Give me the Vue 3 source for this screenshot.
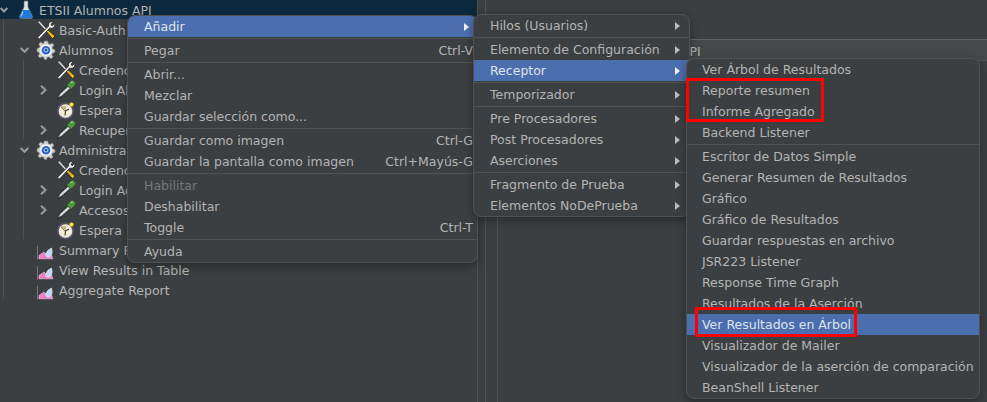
<script setup>
// arbol de la izquierda
const tree = [
  { label: 'Basic-Auth', icon: 'tool' },
  {
    label: 'Alumnos', icon: 'gear', open: true,
    children: [
      { label: 'Credenciales', icon: 'tool' },
      { label: 'Login Alumno', icon: 'dropper', arrow: true },
      { label: 'Espera', icon: 'timer' },
      { label: 'Recuperar datos', icon: 'dropper', arrow: true }
    ]
  },
  {
    label: 'Administradores', icon: 'gear', open: true,
    children: [
      { label: 'Credenciales', icon: 'tool' },
      { label: 'Login Admin', icon: 'dropper', arrow: true },
      { label: 'Accesos', icon: 'dropper', arrow: true },
      { label: 'Espera', icon: 'timer' }
    ]
  },
  { label: 'Summary Report', icon: 'chart' },
  { label: 'View Results in Table', icon: 'chart' },
  { label: 'Aggregate Report', icon: 'chart' }
]

// '-' es un separador
const mainMenu = [
  { label: 'Añadir', active: true, sub: true },
  '-',
  { label: 'Pegar', key: 'Ctrl-V' },
  '-',
  { label: 'Abrir...' },
  { label: 'Mezclar' },
  { label: 'Guardar selección como...' },
  '-',
  { label: 'Guardar como imagen', key: 'Ctrl-G' },
  { label: 'Guardar la pantalla como imagen', key: 'Ctrl+Mayús-G' },
  '-',
  { label: 'Habilitar', disabled: true },
  { label: 'Deshabilitar' },
  { label: 'Toggle', key: 'Ctrl-T' },
  '-',
  { label: 'Ayuda' }
]

const addMenu = [
  { label: 'Hilos (Usuarios)', sub: true },
  '-',
  { label: 'Elemento de Configuración', sub: true },
  { label: 'Receptor', sub: true, active: true },
  '-',
  { label: 'Temporizador', sub: true },
  '-',
  { label: 'Pre Procesadores', sub: true },
  { label: 'Post Procesadores', sub: true },
  { label: 'Aserciones', sub: true },
  '-',
  { label: 'Fragmento de Prueba', sub: true },
  { label: 'Elementos NoDePrueba', sub: true }
]

const listenerMenu = [
  { label: 'Ver Árbol de Resultados' },
  { label: 'Reporte resumen' },
  { label: 'Informe Agregado' },
  { label: 'Backend Listener' },
  '-',
  { label: 'Escritor de Datos Simple' },
  { label: 'Generar Resumen de Resultados' },
  { label: 'Gráfico' },
  { label: 'Gráfico de Resultados' },
  { label: 'Guardar respuestas en archivo' },
  { label: 'JSR223 Listener' },
  { label: 'Response Time Graph' },
  { label: 'Resultados de la Aserción' },
  { label: 'Ver Resultados en Árbol', active: true },
  { label: 'Visualizador de Mailer' },
  { label: 'Visualizador de la aserción de comparación' },
  { label: 'BeanShell Listener' }
]

const menus = [
  { name: 'main', items: mainMenu },
  { name: 'add', items: addMenu },
  { name: 'listener', items: listenerMenu }
]
</script>

<template>
  <div class="window">
    <!-- iconos reutilizados por el arbol -->
    <svg class="defs" width="0" height="0">
      <defs>
        <symbol id="tool" viewBox="0 0 20 20">
          <path d="M1.500 2 3.500 .8 10.500 8.500 9 10Z" fill="#d8d8d8" stroke="#222" stroke-width=".7" />
          <path d="M9.500 10.500 11 9 19 16 16.500 18.800Z" fill="#f2b71c" stroke="#222" stroke-width=".8" />
          <path d="M1.500 17.500 12.500 6C12 3.500 14 1 17.500 1.500L15 4.200 16 5.800 18.800 3.500C19.500 7 16.500 9 13.800 8L3.500 19Z" fill="#ececec" stroke="#222" stroke-width=".8" />
        </symbol>
        <symbol id="flask" viewBox="0 0 20 20">
          <path d="M8 1H12V7L16.500 16.500Q17 18.500 15 18.500H5Q3 18.500 3.500 16.500L8 7Z" fill="#dfe6ee" stroke="#56606c" stroke-width=".7" />
          <path d="M6.600 10H13.400L16.300 16.500Q16.600 18 15 18H5Q3.400 18 3.700 16.500Z" fill="#1f78d8" />
          <path d="M7 11.500 5.200 16.400" stroke="#9cd0ff" stroke-width="1.200" fill="none" />
        </symbol>
        <symbol id="gear" viewBox="0 0 20 20">
          <path d="M8.200 1H11.800L12.300 3.400 14.200 4.200 16.300 2.900 18.100 5.500 16.200 7.200 16.700 9 19 9.600V12.400L16.700 13 15.900 14.900 17.200 17 14.800 18.800 13 17 11.200 17.600 10.800 19.500H8.200L7.800 17.500 5.900 16.800 3.900 18.100 1.900 15.900 3.400 14 2.800 12.300 1 11.800V8.400L3 8 3.800 6 2.600 4 4.800 2 6.800 3.400 7.900 3Z" fill="#cfcfcf" stroke="#777" stroke-width=".6" />
          <circle cx="10" cy="10.200" r="6" fill="#f4f4f4" />
          <circle cx="10" cy="10.200" r="4.300" fill="#2f63c4" />
          <circle cx="10" cy="10.200" r="2.400" fill="#8fb6ee" />
          <circle cx="10" cy="10.200" r="1.100" fill="#1d3d80" />
        </symbol>
        <symbol id="dropper" viewBox="0 0 20 20">
          <path d="M.8 19.500 5 17.800 14.500 9 11 5.800 2.500 14.500Z" fill="#25272a" />
          <path d="M2 17.500 4 14 12 6.500 14 8.500 5.500 16Z" fill="#d9dde0" stroke="#50555a" stroke-width=".6" />
          <path d="M11 5 14.500 1.200Q17 -.2 18.800 1.800T18.300 5.800L15 9Z" fill="#4f9a3c" stroke="#2c5d24" stroke-width=".6" />
          <path d="M14.500 2.800 16.800 1.800" stroke="#a8dc90" stroke-width="1.200" />
        </symbol>
        <symbol id="timer" viewBox="0 0 20 20">
          <circle cx="9.500" cy="11" r="8.500" fill="#5c5570" />
          <circle cx="9.500" cy="11" r="6.800" fill="#f1ecdc" />
          <path d="M5.500 7 9.500 11 9 15.500M9.500 11 13 9" stroke="#4a4030" stroke-width="1.200" fill="none" />
          <path d="M4.500 6.500 10.500 6 9 11Z" fill="#c9b57c" />
          <circle cx="15.500" cy="4.500" r="2" fill="#ffe93d" stroke="#b8a020" stroke-width=".4" />
        </symbol>
        <symbol id="chart" viewBox="0 0 20 20">
          <path d="M1.500 6V19.500" stroke="#777" stroke-width="1" />
          <path d="M3 18.800V15.500L8 12 11 15 15 14 17 18.800Z" fill="#ee7fc6" stroke="#f9c5e6" stroke-width=".6" />
          <path d="M9.500 15Q10.500 10 15.500 8 16.800 12 15.500 15 13.500 18 11 17Z" fill="#bcd9f7" stroke="#e8f3ff" stroke-width=".6" />
        </symbol>
      </defs>
    </svg>

    <!-- panel izquierdo con el arbol -->
    <aside class="tree">
      <div class="row selected">
        <span class="twisty"><svg width="8" height="6" viewBox="0 0 8 6"><path d="M.7 1 4 4.500 7.300 1" /></svg></span>
        <svg class="icon"><use href="#flask" /></svg>
        <span>ETSII Alumnos API</span>
      </div>
      <div class="group">
        <template v-for="node in tree" :key="node.label">
          <div class="row">
            <span class="twisty">
              <svg v-if="node.open" width="9" height="6" viewBox="0 0 9 6"><path d="M.7 1 4.500 4.800 8.300 1" /></svg>
            </span>
            <svg class="icon"><use :href="'#' + node.icon" /></svg>
            <span>{{ node.label }}</span>
          </div>
          <div v-if="node.children" class="group">
            <div v-for="child in node.children" :key="child.label" class="row">
              <span class="twisty">
                <svg v-if="child.arrow" width="7" height="10" viewBox="0 0 7 10"><path d="M1 .8 5.500 5 1 9.200" /></svg>
              </span>
              <svg class="icon"><use :href="'#' + child.icon" /></svg>
              <span>{{ child.label }}</span>
            </div>
          </div>
        </template>
      </div>
    </aside>

    <!-- panel derecho, casi todo tapado por los menus -->
    <main class="content">
      <div class="top-space"></div>
      <div class="title-band">ETSII Alumnos API</div>
      <div class="inner"></div>
    </main>

    <!-- menus emergentes -->
    <div v-for="menu in menus" :key="menu.name" class="menu" :class="menu.name">
      <template v-for="(item, i) in menu.items" :key="i">
        <div v-if="item === '-'" class="sep"></div>
        <div v-else class="item" :class="{ active: item.active, disabled: item.disabled }">
          <span class="text">{{ item.label }}</span>
          <span v-if="item.key" class="key">{{ item.key }}</span>
          <span v-if="item.sub" class="arrow"></span>
        </div>
      </template>
    </div>

    <!-- recuadros rojos de la captura -->
    <div class="mark mark-a"></div>
    <div class="mark mark-b"></div>
  </div>
</template>

<style>
html, body {
  margin: 0;
  background: #3c3f41;
}
</style>

<style scoped>
.window {
  position: relative;
  display: flex;
  width: 987px;
  height: 402px;
  overflow: hidden;
  background: #3c3f41;
  color: #b4b4b4;
  font-family: "DejaVu Sans", sans-serif;
  font-size: 12.5px;
}

.defs {
  position: absolute;
}

/* arbol */
.tree {
  width: 477px;
  flex-shrink: 0;
  margin-top: -1px;
  border-right: 1px solid #515151;
}

.row {
  display: flex;
  align-items: center;
  height: 20px;
  padding-top: 2px;
  box-sizing: border-box;
  white-space: nowrap;
}

.selected {
  background: #0d293e;
}

.twisty {
  display: flex;
  align-items: center;
  width: 16px;
  height: 18px;
  flex-shrink: 0;
}

.twisty svg {
  fill: none;
  stroke: #9a9da0;
  stroke-width: 2;
}

.icon {
  width: 20px;
  height: 20px;
  margin-right: 3px;
  flex-shrink: 0;
}

.group {
  margin-left: 3px;
  padding-left: 16px;
  border-left: 1px solid #515151;
}

/* panel derecho */
.content {
  flex: 1;
  display: flex;
  flex-direction: column;
  margin-left: 7px;
  border-left: 1px solid #515151;
}

.top-space {
  height: 39px;
  border-bottom: 1px solid #606366;
  flex-shrink: 0;
}

.title-band {
  height: 20px;
  line-height: 23px;
  padding-left: 102px;
  background: #45494a;
  border-bottom: 1px solid #515151;
  flex-shrink: 0;
  white-space: nowrap;
}

.inner {
  flex: 1;
  margin-left: 11px;
  border-left: 1px solid #515151;
}

/* menus */
.menu {
  position: absolute;
  box-sizing: border-box;
  overflow: hidden;
  background: #3c3f41;
  border: 1px solid #515151;
  border-radius: 8px;
  box-shadow: 0 3px 10px rgba(0, 0, 0, 0.35);
}

.main {
  left: 127px;
  top: 15px;
  width: 351px;
}

.add {
  left: 473px;
  top: 14px;
  width: 217px;
}

.listener {
  left: 686px;
  top: 58px;
  width: 294px;
}

.item {
  display: flex;
  align-items: center;
  height: 21px;
  padding-left: 16px;
  padding-right: 5px;
  white-space: nowrap;
}

.listener .item {
  padding-left: 15px;
}

.text {
  flex: 1;
}

.add .item {
  padding-right: 9px;
}

.main .item {
  padding-right: 4px;
}

.main .arrow {
  margin-right: 4px;
}

.item.active {
  background: #4b6eaf;
  color: #dfe3ea;
}

.item.disabled {
  color: #777777;
}

.sep {
  height: 1px;
  margin: 1px 0;
  background: #515151;
}

.arrow {
  width: 0;
  height: 0;
  border-left: 5px solid #bbbbbb;
  border-top: 4px solid transparent;
  border-bottom: 4px solid transparent;
}

.item.active .arrow {
  border-left-color: #f0f0f0;
}

.key {
  margin-left: 20px;
}

/* recuadros rojos */
.mark {
  position: absolute;
  box-sizing: border-box;
  border: 3px solid #ff0000;
}

.mark-a {
  left: 686px;
  top: 78px;
  width: 138px;
  height: 44px;
}

.mark-b {
  left: 695px;
  top: 307px;
  width: 162px;
  height: 30px;
}
</style>
